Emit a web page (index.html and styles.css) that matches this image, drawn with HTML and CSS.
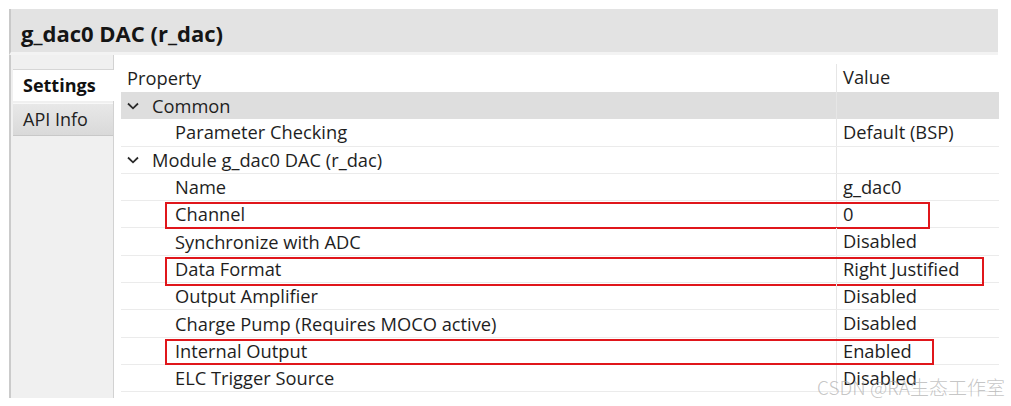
FILE: index.html
```html
<!DOCTYPE html>
<html>
<head>
<meta charset="utf-8">
<link rel="stylesheet" href="styles.css">
</head>
<body>
<div class="window">
  <div class="titlebar">g_dac0 DAC (r_dac)</div>
  <div class="main">
    <div class="side">
      <div class="side-gap"></div>
      <div class="tab tab-active">Settings</div>
      <div class="tab tab-idle">API Info</div>
    </div>
    <div class="content">
      <div class="table">
        <div class="row head"><div class="c1">Property</div><div class="c2">Value</div></div>
        <div class="row group"><div class="c1"><span class="chev"><svg width="12" height="8" viewBox="0 0 12 8"><path d="M1 1.5 L6 6.3 L11 1.5" fill="none" stroke="#2a2a2a" stroke-width="1.8"/></svg></span>Common</div><div class="c2"></div></div>
        <div class="row"><div class="c1 sub">Parameter Checking</div><div class="c2">Default (BSP)</div></div>
        <div class="row"><div class="c1"><span class="chev"><svg width="12" height="8" viewBox="0 0 12 8"><path d="M1 1.5 L6 6.3 L11 1.5" fill="none" stroke="#2a2a2a" stroke-width="1.8"/></svg></span>Module g_dac0 DAC (r_dac)</div><div class="c2"></div></div>
        <div class="row"><div class="c1 sub">Name</div><div class="c2">g_dac0</div></div>
        <div class="row"><div class="c1 sub">Channel</div><div class="c2">0</div><div class="mark mark-a"></div></div>
        <div class="row"><div class="c1 sub">Synchronize with ADC</div><div class="c2">Disabled</div></div>
        <div class="row"><div class="c1 sub">Data Format</div><div class="c2">Right Justified</div><div class="mark mark-b"></div></div>
        <div class="row"><div class="c1 sub">Output Amplifier</div><div class="c2">Disabled</div></div>
        <div class="row"><div class="c1 sub">Charge Pump (Requires MOCO active)</div><div class="c2">Disabled</div></div>
        <div class="row"><div class="c1 sub">Internal Output</div><div class="c2">Enabled</div><div class="mark mark-c"></div></div>
        <div class="row"><div class="c1 sub">ELC Trigger Source</div><div class="c2">Disabled</div></div>
      </div>
    </div>
  </div>
</div>
<div class="watermark">CSDN @RA生态工作室</div>
</body>
</html>
```
FILE: styles.css
```css
html, body {
  margin: 0;
  padding: 0;
  background: #ffffff;
}
body {
  width: 1011px;
  height: 406px;
  overflow: hidden;
  position: relative;
  font-family: "Open Sans", "Noto Sans", sans-serif;
  color: #1e1e1e;
}
.window {
  margin: 9px 0 0 9px;
  width: 989px;
}
.titlebar {
  box-sizing: border-box;
  height: 46px;
  background: #e3e3e3;
  border-left: 2px solid #c9c9c9;
  border-bottom: 3px solid #f3f3f3;
  padding-left: 10px;
  font-size: 22px;
  font-weight: 700;
  line-height: 48px;
  color: #151515;
}
.main {
  display: flex;
  height: 343px;
}
.side {
  width: 102px;
  flex: none;
  background: #f0f0f0;
  border-left: 2px solid #cbcbcb;
  border-right: 1px solid #d2d2d2;
  display: flex;
  flex-direction: column;
}
.side-gap {
  height: 14px;
  border-bottom: 1px solid #d6d6d6;
  margin-left: 2px;
}
.tab {
  margin-left: 2px;
  height: 31px;
  line-height: 31px;
  padding-left: 10px;
  font-size: 18px;
  white-space: nowrap;
}
.tab-active {
  background: #ffffff;
  font-weight: 700;
  margin-right: -1px;
  color: #111;
}
.tab-idle {
  margin-top: 2px;
  background: linear-gradient(#e8e8e8, #d9d9d9);
  border-top: 1px solid #f8f8f8;
  border-bottom: 1px solid #c8c8c8;
  color: #222;
}
.content {
  flex: 1;
  padding: 9px 0 0 7px;
  background: #ffffff;
}
.table {
  width: 878px;
}
.row {
  position: relative;
  display: grid;
  grid-template-columns: 715px 163px;
  height: 27.3px;
  box-sizing: border-box;
  border-bottom: 1px solid #ebebeb;
  font-size: 18.3px;
  line-height: 26px;
}
.row.head {
  height: 28px;
  border-bottom: none;
}
.row.group {
  background: #dedede;
  border-bottom: none;
}
.c1 {
  padding-left: 6px;
  white-space: nowrap;
  display: flex;
  align-items: center;
}
.c1.sub {
  padding-left: 54px;
}
.c2 {
  border-left: 1px solid #e6e6e6;
  padding-left: 6px;
  white-space: nowrap;
}
.chev {
  display: inline-block;
  width: 25px;
  line-height: 0;
}
.mark {
  position: absolute;
  border: 2px solid #e0161b;
  box-sizing: border-box;
}
.mark-a {
  left: 44px;
  top: 1px;
  width: 765px;
  height: 27px;
}
.mark-b {
  left: 44px;
  top: 1px;
  width: 819px;
  height: 29px;
}
.mark-c {
  left: 44px;
  top: 1px;
  width: 769px;
  height: 26px;
}
.watermark {
  position: absolute;
  right: 6px;
  bottom: 8px;
  font-family: "Noto Sans CJK SC", "Noto Sans", sans-serif;
  font-size: 19px;
  font-weight: 300;
  color: rgba(160, 160, 160, 0.6);
  line-height: 22px;
}
```
